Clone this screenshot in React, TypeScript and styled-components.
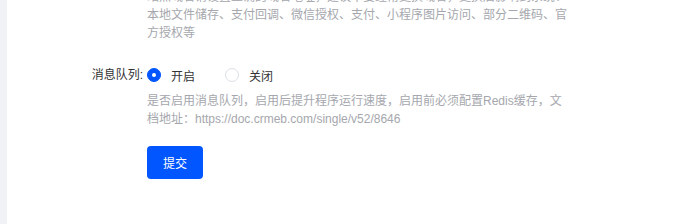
import React, { useState } from "react";
import styled, { createGlobalStyle } from "styled-components";

const GlobalStyle = createGlobalStyle`
  html, body {
    margin: 0;
    padding: 0;
    background: #ffffff;
  }
  body {
    font-family: "Liberation Sans", "Noto Sans CJK SC", sans-serif;
    font-size: 12px;
    color: #333333;
  }
`;

const Page = styled.div`
  display: flex;
  height: 224px;
  overflow: hidden;
`;

const Side = styled.div`
  width: 7px;
  flex-shrink: 0;
  background: #f0f2f5;
`;

const Main = styled.div`
  flex: 1;
  display: flex;
  flex-direction: column;
  background: #ffffff;
  overflow: hidden;
`;

const FormItem = styled.div<{ $offset?: number }>`
  display: flex;
  margin-top: ${(p) => p.$offset ?? 0}px;
`;

const Label = styled.label`
  width: 136px;
  padding-right: 4px;
  flex-shrink: 0;
  text-align: right;
  line-height: 32px;
  font-size: 12px;
  color: #333333;
`;

const Content = styled.div<{ $indent?: boolean }>`
  display: flex;
  flex-direction: column;
  margin-left: ${(p) => (p.$indent ? "140px" : "0")};
`;

const Tip = styled.div<{ $gap?: number }>`
  width: 420px;
  margin-top: ${(p) => p.$gap ?? 0}px;
  font-size: 12px;
  line-height: 18px;
  color: #a5a7ad;
`;

const RadioGroup = styled.div`
  display: flex;
  align-items: center;
  height: 32px;
`;

const RadioItem = styled.label`
  display: flex;
  align-items: center;
  margin-right: 30px;
  cursor: pointer;
  font-size: 12px;
  color: #333333;
`;

const Circle = styled.span<{ $checked: boolean }>`
  width: 14px;
  height: 14px;
  box-sizing: border-box;
  border-radius: 50%;
  border: 1px solid ${(p) => (p.$checked ? "#0256ff" : "#dcdfe6")};
  background: ${(p) => (p.$checked ? "#0256ff" : "#ffffff")};
  display: flex;
  align-items: center;
  justify-content: center;
  margin-right: 10px;

  &::after {
    content: "";
    width: 4px;
    height: 4px;
    border-radius: 50%;
    background: #ffffff;
    display: ${(p) => (p.$checked ? "block" : "none")};
  }
`;

const SubmitButton = styled.button`
  width: 56px;
  height: 33px;
  border: none;
  border-radius: 4px;
  background: #0256ff;
  color: #ffffff;
  font-family: inherit;
  font-size: 12px;
  cursor: pointer;
  padding: 0;
`;

const App: React.FC = () => {
  const [queue, setQueue] = useState(true);

  return (
    <>
      <GlobalStyle />
      <Page>
        <Side />
        <Main>
          <FormItem $offset={-12}>
            <Content $indent>
              <Tip>
                站点域名请设置正确的域名地址，建议不要经常更换域名，更换后影响到系统：本地文件储存、支付回调、微信授权、支付、小程序图片访问、部分二维码、官方授权等
              </Tip>
            </Content>
          </FormItem>

          <FormItem $offset={17}>
            <Label>消息队列:</Label>
            <Content>
              <RadioGroup>
                <RadioItem onClick={() => setQueue(true)}>
                  <Circle $checked={queue} />
                  开启
                </RadioItem>
                <RadioItem onClick={() => setQueue(false)}>
                  <Circle $checked={!queue} />
                  关闭
                </RadioItem>
              </RadioGroup>
              <Tip $gap={1}>
                是否启用消息队列，启用后提升程序运行速度，启用前必须配置Redis缓存，文档地址：https://doc.crmeb.com/single/v52/8646
              </Tip>
            </Content>
          </FormItem>

          <FormItem $offset={18}>
            <Content $indent>
              <div>
                <SubmitButton type="button">提交</SubmitButton>
              </div>
            </Content>
          </FormItem>
        </Main>
      </Page>
    </>
  );
};

export default App;
